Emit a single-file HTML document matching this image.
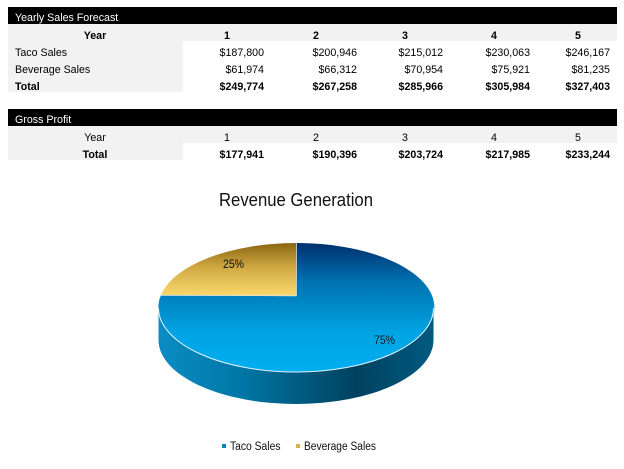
<!DOCTYPE html>
<html>
<head>
<meta charset="utf-8">
<style>
html,body{margin:0;padding:0;background:#fff;}
#p{position:relative;width:624px;height:469px;overflow:hidden;background:#fff;font-family:"Liberation Sans",Arial,sans-serif;font-size:10.67px;color:#000;}
.b{position:absolute;}
.t{position:absolute;height:17px;line-height:17px;white-space:nowrap;}
.r{text-align:right;width:70px;}
.c{text-align:center;width:40px;}
.h{font-weight:bold;}
.w{color:#fff;}
</style>
</head>
<body>
<div id="p">
<div class="b" style="left:8px;top:7px;width:609px;height:17px;background:#000"></div>
<div class="b" style="left:8px;top:24px;width:609px;height:17px;background:#f2f2f2"></div>
<div class="b" style="left:8px;top:41px;width:175px;height:51px;background:#f2f2f2"></div>
<div class="b" style="left:8px;top:109px;width:609px;height:17px;background:#000"></div>
<div class="b" style="left:8px;top:126px;width:609px;height:17px;background:#f2f2f2"></div>
<div class="b" style="left:8px;top:143px;width:175px;height:17px;background:#f2f2f2"></div>

<div class="t w" style="left:15px;top:10px">Yearly Sales Forecast</div>
<div class="t h c" style="left:75px;top:28px">Year</div>
<div class="t h c" style="left:207px;top:28px">1</div>
<div class="t h c" style="left:296px;top:28px">2</div>
<div class="t h c" style="left:385px;top:28px">3</div>
<div class="t h c" style="left:474px;top:28px">4</div>
<div class="t h c" style="left:558px;top:28px">5</div>

<div class="t" style="left:15px;top:45px">Taco Sales</div>
<div class="t r" style="left:194px;top:45px">$187,800</div>
<div class="t r" style="left:287px;top:45px">$200,946</div>
<div class="t r" style="left:373px;top:45px">$215,012</div>
<div class="t r" style="left:460px;top:45px">$230,063</div>
<div class="t r" style="left:540px;top:45px">$246,167</div>

<div class="t" style="left:15px;top:62px">Beverage Sales</div>
<div class="t r" style="left:194px;top:62px">$61,974</div>
<div class="t r" style="left:287px;top:62px">$66,312</div>
<div class="t r" style="left:373px;top:62px">$70,954</div>
<div class="t r" style="left:460px;top:62px">$75,921</div>
<div class="t r" style="left:540px;top:62px">$81,235</div>

<div class="t h" style="left:15px;top:79px">Total</div>
<div class="t h r" style="left:194px;top:79px">$249,774</div>
<div class="t h r" style="left:287px;top:79px">$267,258</div>
<div class="t h r" style="left:373px;top:79px">$285,966</div>
<div class="t h r" style="left:460px;top:79px">$305,984</div>
<div class="t h r" style="left:540px;top:79px">$327,403</div>

<div class="t w" style="left:15px;top:112px">Gross Profit</div>
<div class="t c" style="left:75px;top:130px">Year</div>
<div class="t c" style="left:207px;top:130px">1</div>
<div class="t c" style="left:296px;top:130px">2</div>
<div class="t c" style="left:385px;top:130px">3</div>
<div class="t c" style="left:474px;top:130px">4</div>
<div class="t c" style="left:558px;top:130px">5</div>

<div class="t h c" style="left:75px;top:147px">Total</div>
<div class="t h r" style="left:194px;top:147px">$177,941</div>
<div class="t h r" style="left:287px;top:147px">$190,396</div>
<div class="t h r" style="left:373px;top:147px">$203,724</div>
<div class="t h r" style="left:460px;top:147px">$217,985</div>
<div class="t h r" style="left:540px;top:147px">$233,244</div>

<svg class="b" style="left:0;top:0" width="624" height="469" viewBox="0 0 624 469">
<defs>
<linearGradient id="side" x1="158" x2="433" y1="0" y2="0" gradientUnits="userSpaceOnUse">
<stop offset="0" stop-color="#0a8cc4"/>
<stop offset="0.3" stop-color="#0077a6"/>
<stop offset="0.72" stop-color="#00415f"/>
<stop offset="1" stop-color="#005a80"/>
</linearGradient>
<linearGradient id="blue" x1="0" x2="0" y1="243" y2="372" gradientUnits="userSpaceOnUse">
<stop offset="0" stop-color="#002f6e"/>
<stop offset="0.3" stop-color="#0072b0"/>
<stop offset="0.7" stop-color="#00a4e4"/>
<stop offset="1" stop-color="#00aeef"/>
</linearGradient>
<linearGradient id="gold" x1="0" x2="0" y1="243" y2="296" gradientUnits="userSpaceOnUse">
<stop offset="0" stop-color="#8a6510"/>
<stop offset="0.45" stop-color="#cfa842"/>
<stop offset="1" stop-color="#fbd86c"/>
</linearGradient>
</defs>
<path d="M158.5,308 L158.5,340 A137.5,64 0 0 0 433.5,340 L433.5,308 Z" fill="url(#side)"/>
<path d="M296,243 A138,64.5 0 1 1 161,295 L296,296 Z" fill="url(#blue)"/>
<path d="M296,243 A138,64.5 0 0 0 161,295 L296,296 Z" fill="url(#gold)"/>
<path d="M158.5,308 A137.5,64 0 0 0 433.5,308" fill="none" stroke="#e4f4fb" stroke-width="1"/>
<path d="M161,295.3 L296.5,295.8 L296.5,243" fill="none" stroke="#dfe3df" stroke-width="0.8"/>
<text x="219" y="206" font-family="Liberation Sans,sans-serif" font-size="18.5" textLength="154" lengthAdjust="spacingAndGlyphs" fill="#111">Revenue Generation</text>
<text x="223" y="268" font-family="Liberation Sans,sans-serif" font-size="11.5" textLength="21" lengthAdjust="spacingAndGlyphs" fill="#111">25%</text>
<text x="374" y="344" font-family="Liberation Sans,sans-serif" font-size="11.5" textLength="21" lengthAdjust="spacingAndGlyphs" fill="#0a1a24">75%</text>
<rect x="222" y="444" width="4" height="4" fill="#0a84bd"/>
<text x="230" y="450" font-family="Liberation Sans,sans-serif" font-size="11.5" textLength="50.5" lengthAdjust="spacingAndGlyphs" fill="#111">Taco Sales</text>
<rect x="296" y="444" width="4" height="4" fill="#d3b258"/>
<text x="304" y="450" font-family="Liberation Sans,sans-serif" font-size="11.5" textLength="72" lengthAdjust="spacingAndGlyphs" fill="#111">Beverage Sales</text>
</svg>
</div>
</body>
</html>
